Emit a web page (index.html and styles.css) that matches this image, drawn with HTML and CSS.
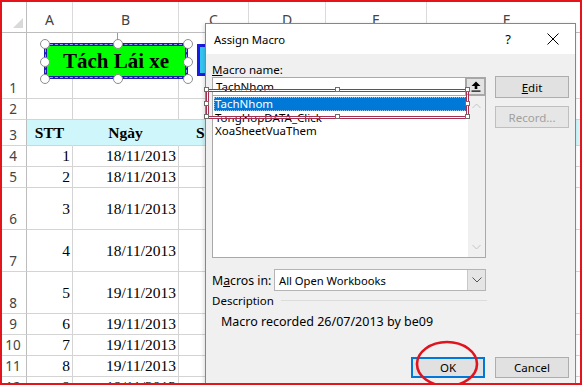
FILE: index.html
```html
<!DOCTYPE html>
<html lang="vi">
<head>
  <meta charset="UTF-8">
  <title>Assign Macro</title>
  <link rel="stylesheet" href="styles.css">
</head>
<body>
<div class="screen">

  <!-- Bang tinh -->
  <div class="sheet">
    <div class="row head">
      <div class="corner"><span class="tri"></span></div>
      <div>A</div><div>B</div><div>C</div><div>D</div><div>E</div><div>F</div>
    </div>
    <div class="row r66">
      <div class="rh">1</div><div></div><div></div><div></div><div></div><div></div><div></div>
    </div>
    <div class="row">
      <div class="rh">2</div><div></div><div></div><div></div><div></div><div></div><div></div>
    </div>
    <div class="row r26 fill">
      <div class="rh">3</div><div class="th">STT</div><div class="th">Ngày</div><div class="th">Số xe</div><div></div><div></div><div></div>
    </div>
    <div class="row">
      <div class="rh">4</div><div class="num">1</div><div class="num">18/11/2013</div><div></div><div></div><div></div><div></div>
    </div>
    <div class="row">
      <div class="rh">5</div><div class="num">2</div><div class="num">18/11/2013</div><div></div><div></div><div></div><div></div>
    </div>
    <div class="row r42">
      <div class="rh">6</div><div class="num">3</div><div class="num">18/11/2013</div><div></div><div></div><div></div><div></div>
    </div>
    <div class="row r42">
      <div class="rh">7</div><div class="num">4</div><div class="num">18/11/2013</div><div></div><div></div><div></div><div></div>
    </div>
    <div class="row r42">
      <div class="rh">8</div><div class="num">5</div><div class="num">19/11/2013</div><div></div><div></div><div></div><div></div>
    </div>
    <div class="row">
      <div class="rh">9</div><div class="num">6</div><div class="num">19/11/2013</div><div></div><div></div><div></div><div></div>
    </div>
    <div class="row">
      <div class="rh">10</div><div class="num">7</div><div class="num">19/11/2013</div><div></div><div></div><div></div><div></div>
    </div>
    <div class="row">
      <div class="rh">11</div><div class="num">8</div><div class="num">19/11/2013</div><div></div><div></div><div></div><div></div>
    </div>
    <div class="row">
      <div class="rh">12</div><div class="num">9</div><div class="num">19/11/2013</div><div></div><div></div><div></div><div></div>
    </div>
  </div>

  <!-- Nut hinh tren sheet -->
  <div class="shape-btn">
    Tách Lái xe
    <span class="rot"></span>
    <span class="h h1"></span><span class="h h2"></span><span class="h h3"></span>
    <span class="h h4"></span><span class="h h5"></span>
    <span class="h h6"></span><span class="h h7"></span><span class="h h8"></span>
  </div>
  <div class="shape-btn2"></div>

  <!-- Hop thoai -->
  <div class="dialog">
    <div class="titlebar">
      <span class="title">Assign Macro</span>
      <span class="help">?</span>
      <svg class="close" width="12" height="12" viewBox="0 0 12 12">
        <path d="M0.5 0.5 L11.5 11.5 M11.5 0.5 L0.5 11.5" stroke="#000" stroke-width="1" fill="none"/>
      </svg>
    </div>
    <div class="dlg-body">
      <div class="top">
        <div class="leftcol">
          <div class="lbl"><u>M</u>acro name:</div>
          <div class="namefield">
            <span class="val">TachNhom</span>
            <span class="upbtn">
              <svg width="10" height="11" viewBox="0 0 10 11">
                <path d="M5 0.5 L9.5 5 L6.3 5 L6.3 8 L3.7 8 L3.7 5 L0.5 5 Z" fill="#000"/>
                <rect x="0.5" y="9.5" width="9" height="1.2" fill="#000"/>
              </svg>
            </span>
          </div>
          <div class="list">
            <div class="items">
              <div class="item selected">TachNhom</div>
              <div class="item">TongHopDATA_Click</div>
              <div class="item">XoaSheetVuaThem</div>
            </div>
            <div class="vscroll">
              <svg width="9" height="6" viewBox="0 0 9 6"><path d="M0.5 5 L4.5 1 L8.5 5" stroke="#c4c4c4" fill="none"/></svg>
              <svg width="9" height="6" viewBox="0 0 9 6"><path d="M0.5 1 L4.5 5 L8.5 1" stroke="#c4c4c4" fill="none"/></svg>
            </div>
          </div>
        </div>
        <div class="rightcol">
          <div class="btn"><u>E</u>dit</div>
          <div class="btn disabled">Record...</div>
        </div>
      </div>

      <div class="macros-in">
        <span>M<u>a</u>cros in:</span>
        <div class="combo">
          <span class="val">All Open Workbooks</span>
          <span class="drop">
            <svg width="10" height="6" viewBox="0 0 10 6"><path d="M0.5 0.5 L5 5 L9.5 0.5" stroke="#555" fill="none"/></svg>
          </span>
        </div>
      </div>

      <div class="desc-head"><span>Description</span><div class="rule"></div></div>
      <div class="desc">Macro recorded 26/07/2013 by be09</div>

      <div class="actions">
        <div class="btn ok">OK</div>
        <div class="btn">Cancel</div>
      </div>
    </div>
  </div>

  <!-- Khung chon mau do -->
  <div class="selbox">
    <span class="sq s1"></span><span class="sq s2"></span><span class="sq s3"></span>
    <span class="sq s4"></span><span class="sq s5"></span>
    <span class="sq s6"></span><span class="sq s7"></span><span class="sq s8"></span>
  </div>

  <svg class="ring" width="70" height="56" viewBox="0 0 70 56">
    <ellipse cx="34" cy="25" rx="30" ry="22" stroke="#e0141e" stroke-width="2.6" fill="none"/>
  </svg>
</div>
</body>
</html>
```

FILE: styles.css
```css
body {
  margin: 0;
  background: #fff;
  font-family: "Noto Sans", sans-serif;
}

.screen {
  position: relative;
  width: 582px;
  height: 385px;
  overflow: hidden;
  background: #fff;
}

.screen::after {
  content: "";
  position: absolute;
  inset: 0;
  border: 2px solid #e3141b;
  z-index: 20;
  pointer-events: none;
}

/* ---- bang tinh ---- */

.row {
  display: grid;
  grid-template-columns: 27px 46px 106px 70px 77px 101px 160px;
  height: 21px;
}

.row > div {
  box-sizing: border-box;
  border-right: 1px solid #d4d4d4;
  border-bottom: 1px solid #d4d4d4;
  display: flex;
  align-items: center;
  font-family: "Liberation Serif", serif;
  font-size: 15.5px;
  color: #000;
}

.r26 { height: 26px; }
.r42 { height: 42px; }
.r66 { height: 66px; }

.row.head {
  height: 33px;
}

.row.head > div {
  font-family: "Noto Sans", sans-serif;
  font-size: 14px;
  color: #444;
  justify-content: center;
  align-items: flex-end;
  padding-bottom: 3px;
  border-bottom-color: #bdbdbd;
  border-right-color: #dadada;
}

.row.head > .corner {
  border-right-color: #bdbdbd;
  position: relative;
}

.tri {
  position: absolute;
  left: 13px;
  top: 18px;
  width: 10px;
  height: 10px;
  background: #d9d9d9;
  clip-path: polygon(100% 0, 100% 100%, 0 100%);
}

.row > .rh {
  font-family: "Noto Sans", sans-serif;
  font-size: 13.5px;
  color: #444;
  justify-content: center;
  align-items: flex-end;
  padding-bottom: 1px;
  border-right-color: #bdbdbd;
}

.num {
  justify-content: flex-end;
  padding-right: 2px;
}

.fill > div:not(.rh) {
  background: #cef6fb;
  border-right-color: #cef6fb;
}

.th {
  justify-content: center;
  font-weight: bold;
}

/* ---- nut hinh ---- */

.shape-btn {
  position: absolute;
  left: 44px;
  top: 43px;
  width: 144px;
  height: 36px;
  box-sizing: border-box;
  background: #00ff00;
  border: 3px solid #1b1bad;
  outline: 1px dashed #9a9aff;
  outline-offset: -2px;
  display: flex;
  align-items: center;
  justify-content: center;
  font-family: "Liberation Serif", serif;
  font-weight: bold;
  font-size: 21px;
  color: #000;
  z-index: 2;
}

.shape-btn .rot {
  position: absolute;
  left: 70px;
  top: -13px;
  width: 1px;
  height: 8px;
  background: #9a9a9a;
}

.h {
  position: absolute;
  width: 8px;
  height: 8px;
  border: 1.5px solid #8c8c8c;
  border-radius: 50%;
  background: #fff;
}

.h1 { left: -7px;  top: -7px; }
.h2 { left: 66px;  top: -7px; }
.h3 { left: 136px; top: -7px; }
.h4 { left: -7px;  top: 11px; }
.h5 { left: 136px; top: 11px; }
.h6 { left: -7px;  top: 28px; }
.h7 { left: 66px;  top: 28px; }
.h8 { left: 136px; top: 28px; }

.shape-btn2 {
  position: absolute;
  left: 197px;
  top: 44px;
  width: 30px;
  height: 32px;
  box-sizing: border-box;
  background: #36c6f6;
  border: 3px solid #1a1ae0;
  z-index: 1;
}

/* ---- hop thoai ---- */

.dialog {
  position: absolute;
  left: 205px;
  top: 23px;
  width: 371px;
  height: 380px;
  box-sizing: border-box;
  border: 1px solid #5b8fc7;
  background: #f0f0f0;
  box-shadow: -1px 1px 4px rgba(0, 0, 0, 0.15);
  font-family: "Noto Sans", sans-serif;
  font-size: 11.5px;
  color: #000;
  z-index: 5;
}

.titlebar {
  height: 30px;
  background: #fff;
  display: flex;
  align-items: center;
  padding-left: 8px;
}

.title {
  font-size: 11.3px;
  flex: 1;
}

.help {
  font-size: 13px;
  margin-right: 36px;
}

.close {
  margin-right: 16px;
}

.dlg-body {
  padding: 8px 6px 0 6px;
}

.top {
  display: flex;
  gap: 9px;
}

.leftcol {
  width: 274px;
}

.lbl {
  height: 15px;
  line-height: 15px;
}

.namefield {
  height: 19px;
  box-sizing: border-box;
  border: 1px solid #a9a9a9;
  background: #fff;
  display: flex;
  align-items: center;
  padding-left: 3px;
}

.namefield .val {
  flex: 1;
}

.upbtn {
  width: 21px;
  height: 19px;
  margin: -1px -1px -1px 0;
  box-sizing: border-box;
  border: 2px solid #a7a7a7;
  background: #e3e3e3;
  display: flex;
  align-items: center;
  justify-content: center;
}

.list {
  height: 162px;
  box-sizing: border-box;
  border: 1px solid #a9a9a9;
  border-top: none;
  background: #fff;
  display: flex;
}

.items {
  flex: 1;
  padding: 1px 1px 0 1px;
}

.item {
  height: 13.5px;
  line-height: 13.5px;
  padding-left: 1px;
}

.item.selected {
  background: #0078d7;
  color: #fff;
  outline: 1px dotted #8fc3ee;
  outline-offset: -1px;
}

.vscroll {
  width: 17px;
  background: #f0f0f0;
  display: flex;
  flex-direction: column;
  justify-content: space-between;
  align-items: center;
  padding: 7px 0 7px 0;
}

.rightcol {
  width: 74px;
  padding-top: 14px;
  display: flex;
  flex-direction: column;
  gap: 8px;
}

.btn {
  height: 22px;
  box-sizing: border-box;
  border: 1px solid #adadad;
  background: #e1e1e1;
  display: flex;
  align-items: center;
  justify-content: center;
}

.btn.disabled {
  color: #a0a0a0;
  border-color: #bfbfbf;
  background: #e6e6e6;
}

.macros-in {
  margin-top: 11px;
  display: grid;
  grid-template-columns: 62px 212px;
  align-items: center;
  height: 22px;
}

.macros-in > span {
  font-size: 12.3px;
}

.combo {
  height: 22px;
  box-sizing: border-box;
  border: 1px solid #b4b4b4;
  background: #fff;
  display: flex;
  align-items: center;
  padding-left: 4px;
}

.combo .val {
  flex: 1;
  font-size: 11.2px;
}

.drop {
  width: 18px;
  height: 20px;
  box-sizing: border-box;
  border-left: 1px solid #c8c8c8;
  background: #e5e5e5;
  display: flex;
  align-items: center;
  justify-content: center;
}

.desc-head {
  margin-top: 2px;
  width: 275px;
  height: 15px;
  display: flex;
  align-items: center;
  gap: 7px;
}

.rule {
  flex: 1;
  height: 1px;
  background: #dcdcdc;
}

.desc {
  margin-top: 6px;
  padding-left: 9px;
  height: 15px;
  line-height: 15px;
  font-size: 12.5px;
}

.actions {
  margin-top: 28px;
  display: flex;
  justify-content: flex-end;
  gap: 10px;
}

.actions .btn {
  width: 74px;
  height: 21px;
}

.btn.ok {
  border: 2px solid #0078d7;
}

/* ---- khung chon do ---- */

.selbox {
  position: absolute;
  left: 206px;
  top: 89px;
  width: 263px;
  height: 30px;
  box-sizing: border-box;
  border: 1px solid #a1314f;
  z-index: 8;
}

.selbox::before {
  content: "";
  position: absolute;
  inset: 0;
  border: 1px dashed #fff;
}

.selbox::after {
  content: "";
  position: absolute;
  inset: 1px;
  border: 1px solid #a1314f;
}

.sq {
  position: absolute;
  width: 5px;
  height: 5px;
  box-sizing: border-box;
  border: 1px solid #6e6e6e;
  background: #fff;
  z-index: 1;
}

.s1 { left: -3px;  top: -3px; }
.s2 { left: 128px; top: -3px; }
.s3 { left: 258px; top: -3px; }
.s4 { left: -3px;  top: 11px; }
.s5 { left: 258px; top: 11px; }
.s6 { left: -3px;  top: 24px; }
.s7 { left: 128px; top: 24px; }
.s8 { left: 258px; top: 24px; }

.ring {
  position: absolute;
  left: 413px;
  top: 339px;
  z-index: 9;
}
```
